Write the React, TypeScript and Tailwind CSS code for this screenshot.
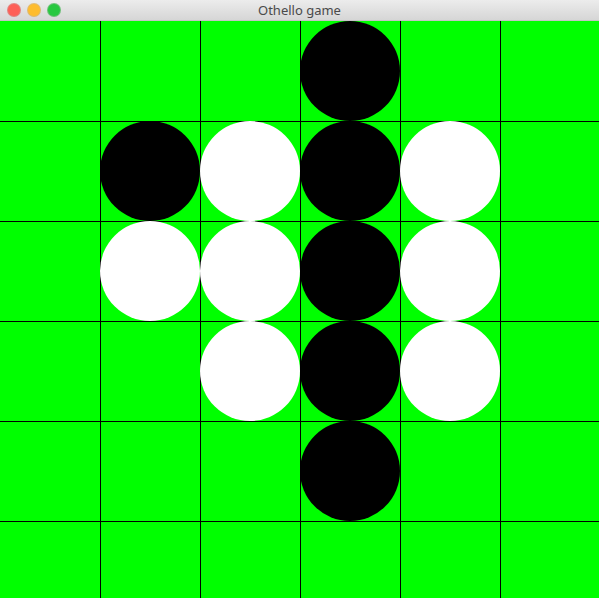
import React from "react";

// 0 = empty, 1 = black, 2 = white
const BOARD: number[][] = [
  [0, 0, 0, 1, 0, 0],
  [0, 1, 2, 1, 2, 0],
  [0, 2, 2, 1, 2, 0],
  [0, 0, 2, 1, 2, 0],
  [0, 0, 0, 1, 0, 0],
  [0, 0, 0, 0, 0, 0],
];

function TitleBar() {
  return (
    <div className="relative flex h-[21px] shrink-0 items-center justify-center border-b border-[#c4c4c4] bg-gradient-to-b from-[#ececec] to-[#d6d6d6]">
      <div className="absolute left-[8px] top-[4px] flex gap-[8px]">
        <span className="h-[12px] w-[12px] rounded-full bg-[#fe5f57] ring-1 ring-[#e1463f]/60" />
        <span className="h-[12px] w-[12px] rounded-full bg-[#febc2e] ring-1 ring-[#dfa023]/60" />
        <span className="h-[12px] w-[12px] rounded-full bg-[#28c840] ring-1 ring-[#1eaa30]/60" />
      </div>
      <span className="text-[13px] leading-none text-[#4a4a4a] [font-family:'Noto_Sans','Liberation_Sans',sans-serif]">
        Othello game
      </span>
    </div>
  );
}

function Cell({ row, col, piece }: { row: number; col: number; piece: number }) {
  return (
    <div className="relative h-[100px] w-[100px]">
      {col > 0 && <div className="absolute left-0 top-0 h-full w-px bg-black" />}
      {row > 0 && <div className="absolute left-0 top-0 h-px w-full bg-black" />}
      {piece === 1 && <div className="absolute inset-0 rounded-full bg-black" />}
      {piece === 2 && <div className="absolute inset-0 rounded-full bg-white" />}
    </div>
  );
}

export default function App() {
  return (
    <div className="flex h-[598px] w-[599px] flex-col overflow-hidden bg-[#00ff00]">
      <TitleBar />
      <div className="grid shrink-0 grid-cols-[repeat(6,100px)] grid-rows-[repeat(6,100px)]">
        {BOARD.map((r, ri) =>
          r.map((p, ci) => <Cell key={`${ri}-${ci}`} row={ri} col={ci} piece={p} />)
        )}
      </div>
    </div>
  );
}
